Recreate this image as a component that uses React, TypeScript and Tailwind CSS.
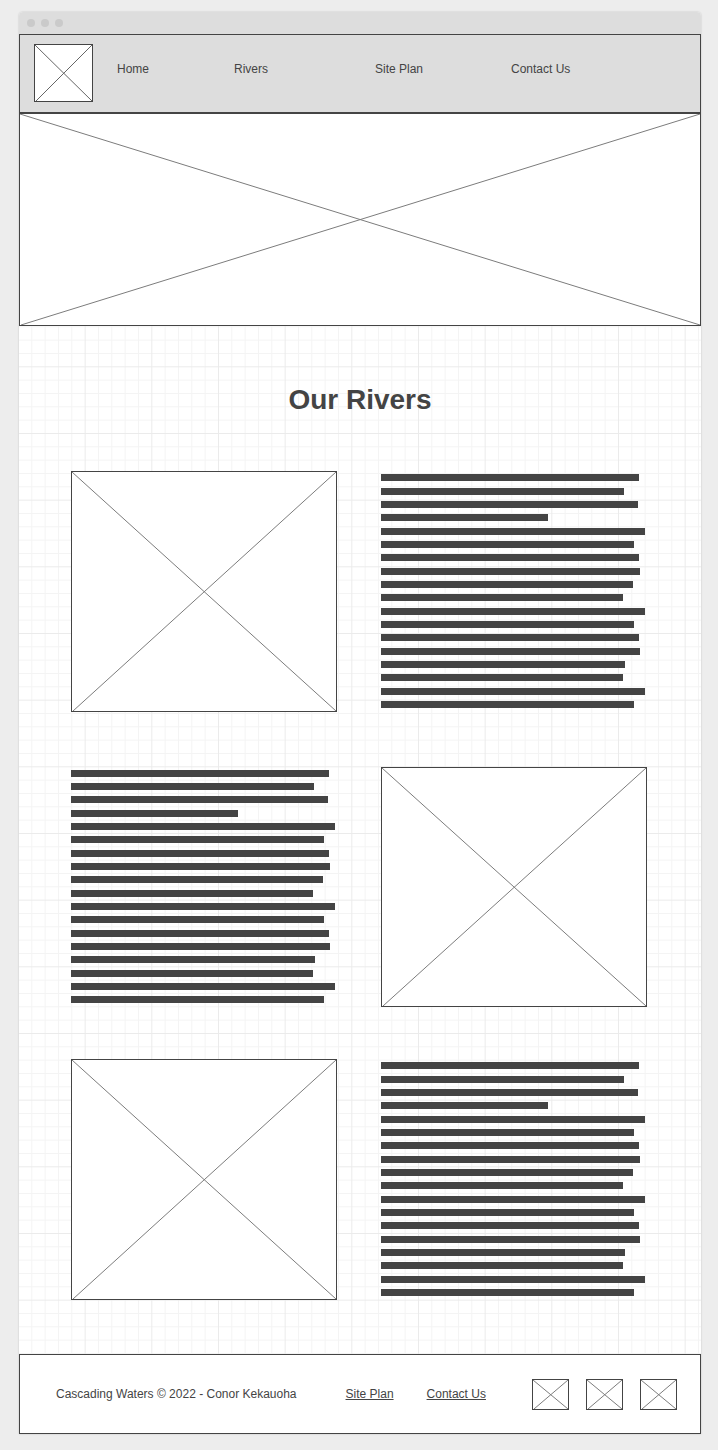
import React from "react";

const LINE_WIDTHS = [258, 243, 257, 167, 264, 253, 258, 259, 252, 242, 264, 253, 258, 259, 244, 242, 264, 253];
const COLUMN_WIDTH = 266;

function Placeholder({ className, stroke = "#7c7c7c" }: { className: string; stroke?: string }) {
  return (
    <div className={`border border-[#444444] bg-white ${className}`}>
      <svg className="block size-full" aria-hidden="true">
        <line x1="0" y1="0" x2="100%" y2="100%" stroke={stroke} />
        <line x1="1" y1="100%" x2="100%" y2="0" stroke={stroke} />
      </svg>
    </div>
  );
}

// Lines sit on a 40px rhythm of three, so one gap in three is a pixel wider.
function TextBlock({ wideGap }: { wideGap: number }) {
  return (
    <div className="flex flex-col pt-[3px]">
      {LINE_WIDTHS.map((width, i) => (
        <div
          key={i}
          className={`h-[7px] bg-[#444444] last:mb-0 ${i % 3 === wideGap ? "mb-[7px]" : "mb-[6px]"}`}
          style={{ width: `${(width / COLUMN_WIDTH) * 100}%` }}
        />
      ))}
    </div>
  );
}

function GridPaper() {
  const tile = 200;
  const steps = Array.from({ length: 16 }, (_, k) => k);
  const ordered = [...steps.filter((k) => k % 5 !== 0), ...steps.filter((k) => k % 5 === 0)];
  return (
    <svg className="absolute inset-0 size-full" aria-hidden="true">
      <defs>
        <pattern id="paper" x="-1" y="107" width={tile} height={tile} patternUnits="userSpaceOnUse">
          {ordered.map((k) => {
            const at = (k * tile) / 15 + 0.5;
            const stroke = k % 5 === 0 ? "#ebebeb" : "#f4f4f4";
            return (
              <g key={k} stroke={stroke}>
                <line x1={at} y1="0" x2={at} y2={tile} />
                <line x1="0" y1={at} x2={tile} y2={at} />
              </g>
            );
          })}
        </pattern>
      </defs>
      <rect width="100%" height="100%" fill="url(#paper)" />
    </svg>
  );
}

export default function App() {
  return (
    <div className="min-h-screen bg-[#ededed] pt-3 pr-[17px] pb-4 pl-[19px] font-['Liberation_Sans',Arial,sans-serif] text-xs text-[#444444]">
      <div className="rounded-t bg-white shadow-[0_0_2px_rgba(0,0,0,0.2)]">
        <div className="flex h-[22px] items-center gap-[6px] rounded-t bg-[#dddddd] px-2">
          <span className="size-2 rounded-full bg-[#cacaca]" />
          <span className="size-2 rounded-full bg-[#cacaca]" />
          <span className="size-2 rounded-full bg-[#cacaca]" />
        </div>

        <header className="flex h-[79px] items-start border border-[#444444] bg-[#dddddd] pl-[14px]">
          <Placeholder className="mt-[9px] h-[58px] w-[59px] shrink-0" stroke="#666666" />
          <nav className="ml-6 grid grid-cols-[117px_141px_136px_auto] pt-[26px]">
            <a href="#home" className="justify-self-start">Home</a>
            <a href="#rivers" className="justify-self-start">Rivers</a>
            <a href="#site-plan" className="justify-self-start">Site Plan</a>
            <a href="#contact" className="justify-self-start">Contact Us</a>
          </nav>
        </header>

        <Placeholder className="h-[213px]" />

        <main className="relative pt-[58px] pb-[54px]">
          <GridPaper />
          <div className="relative">
            <h1 className="text-center text-[28px] leading-8 font-bold">Our Rivers</h1>
            <div className="pr-[54px] pl-[52px]">
              <section className="mt-[55px] grid grid-cols-2 gap-[44px]">
                <Placeholder className="h-[241px]" />
                <TextBlock wideGap={0} />
              </section>
              <section className="mt-[55px] grid grid-cols-2 gap-[44px]">
                <TextBlock wideGap={2} />
                <Placeholder className="h-[240px]" />
              </section>
              <section className="mt-[52px] grid grid-cols-2 gap-[44px]">
                <Placeholder className="h-[241px]" />
                <TextBlock wideGap={0} />
              </section>
            </div>
          </div>
        </main>

        <footer className="flex h-20 items-center border border-[#444444] bg-white pr-[23px] pl-9">
          <p>Cascading Waters © 2022 - Conor Kekauoha</p>
          <a href="#site-plan" className="ml-[49px] underline">Site Plan</a>
          <a href="#contact" className="ml-[33px] underline">Contact Us</a>
          <div className="ml-auto flex gap-[17px]">
            <Placeholder className="h-[31px] w-[37px]" />
            <Placeholder className="h-[31px] w-[37px]" />
            <Placeholder className="h-[31px] w-[37px]" />
          </div>
        </footer>
      </div>
    </div>
  );
}
